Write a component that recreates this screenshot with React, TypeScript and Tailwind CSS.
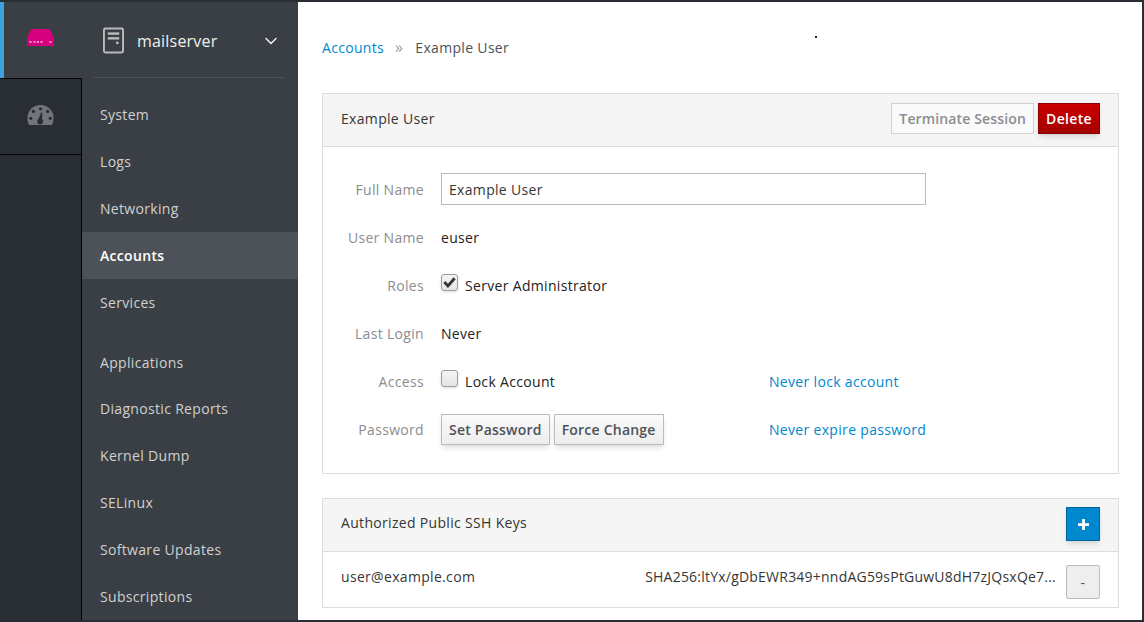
import { ChevronDown } from "lucide-react";

const primaryNav = ["System", "Logs", "Networking", "Accounts", "Services"];
const toolNav = ["Applications", "Diagnostic Reports", "Kernel Dump", "SELinux", "Software Updates", "Subscriptions"];

const NavItem = ({ label, nudge }: { label: string; nudge?: boolean }) => {
  const active = label === "Accounts";
  return (
    <div
      className={
        (nudge ? "pt-[2px] " : "") +
        (active
          ? "h-[47px] flex items-center pl-[18px] bg-[#4d5258] text-white font-semibold"
          : "h-[47px] flex items-center pl-[18px] text-[#d1d1d1]")
      }
    >
      {label}
    </div>
  );
};

const Row = ({ label, children, aside }: { label: string; children: React.ReactNode; aside?: React.ReactNode }) => (
  <div className="h-[48px] flex items-center">
    <div className="w-[83px] text-right text-[#8b8d8f]">{label}</div>
    <div className="w-[328px] ml-[17px] flex items-center text-[#222]">{children}</div>
    {aside && <a className="text-[#0088ce]">{aside}</a>}
  </div>
);

const Check = ({ checked }: { checked?: boolean }) => (
  <span className="relative w-[17px] h-[17px] -mt-[6px] mr-[7px] rounded-[3px] border border-[#9c9c9c] bg-gradient-to-b from-[#f5f5f5] to-[#e4e4e4] shadow-sm">
    {checked && (
      <svg viewBox="0 0 16 16" className="absolute left-[0px] top-0 w-[15px] h-[15px]">
        <path d="M2.5 7.5 L6.3 11.6 L13.5 3.5" fill="none" stroke="#333" strokeWidth="3" />
      </svg>
    )}
  </span>
);

const App = () => {
  return (
    <div className="h-[622px] w-[1144px] overflow-hidden flex flex-col bg-[#292e34] text-[14px] tracking-[0.32px] font-['Open_Sans',sans-serif]">
      <div className="h-[2px] bg-[#292e34] shrink-0" />
      <div className="flex-1 min-h-0 flex">
        {/* host rail */}
        <div className="w-[82px] shrink-0 border-r border-[#030303] bg-[#292e34] flex flex-col">
          <div className="h-[76px] bg-[#393f44] border-l-[4px] border-[#39a5dc] flex items-center justify-center pr-[5px] -mr-[1px] relative">
            <svg viewBox="0 0 27 17" className="w-[27px] h-[17px] -mt-[5px]">
              <path d="M4 0 H22.5 L26.5 8 H0.5 Z" fill="#d6007f" />
              <rect x="0" y="8" width="27" height="9" fill="#d6007f" />
              <g fill="#ec8fc6">
                <rect x="2.5" y="12" width="2" height="2" />
                <rect x="6.5" y="12" width="2" height="2" />
                <rect x="10" y="12" width="2" height="2" />
                <rect x="13.5" y="12" width="2" height="2" />
                <rect x="22.5" y="12" width="2" height="2" />
              </g>
            </svg>
          </div>
          <div className="h-[77px] border-y border-[#030303] flex items-center justify-center">
            <svg viewBox="0 0 28 22" className="w-[27px] h-[21px] -mt-[3px]">
              <path fill="#72767b" d="M14 0 C6.3 0 0.3 6 0.3 13.5 C0.3 16.2 1 18.7 2.2 21 H25.8 C27 18.7 27.7 16.2 27.7 13.5 C27.7 6 21.7 0 14 0 Z" />
              <g fill="#292e34">
                <circle cx="14" cy="4" r="1.7" />
                <circle cx="6.5" cy="6.8" r="1.7" />
                <circle cx="21.5" cy="6.8" r="1.7" />
                <circle cx="3.8" cy="14" r="1.7" />
                <circle cx="24.2" cy="14" r="1.7" />
                <circle cx="13.6" cy="17.2" r="3" />
                <path d="M11.6 16 L14.6 7.6 L15.8 8 L15.6 17 Z" />
              </g>
            </svg>
          </div>
        </div>

        {/* sidebar */}
        <div className="w-[216px] shrink-0 bg-[#393f44] flex flex-col">
          <div className="h-[77px] ml-[12px] mr-[13px] pt-[2px] border-b border-[#4d5258] flex items-center text-[#f0f0f0] text-[16px] tracking-[0.2px]">
            <svg viewBox="0 0 22 27" className="ml-[9px] w-[21px] h-[27px] shrink-0 -mt-[1px]">
              <rect x="1" y="1" width="20" height="25" rx="1.5" fill="none" stroke="#bbb" strokeWidth="2" />
              <rect x="5" y="5" width="12" height="2.5" fill="#bbb" />
              <rect x="5" y="10" width="12" height="2.5" fill="#bbb" />
              <circle cx="15" cy="16" r="1.5" fill="#bbb" />
            </svg>
            <span className="ml-[13px]">mailserver</span>
            <ChevronDown className="w-[20px] h-[20px] ml-auto mr-[4px] text-[#f0f0f0]" strokeWidth={1.75} />
          </div>
          <div className="pt-[13px]">
            {primaryNav.map((n) => (
              <NavItem key={n} label={n} />
            ))}
          </div>
          <div className="mt-[12px]">
            {toolNav.map((n, i) => (
              <NavItem key={n} label={n} nudge={i === 0} />
            ))}
          </div>
        </div>

        {/* main */}
        <div className="flex-1 min-w-0 bg-white relative pl-[24px] pr-[23px] text-[#363636]">
          <div className="absolute left-[517px] top-[34px] w-[2px] h-[2px] bg-[#222]" />
          <div className="h-[91px] flex items-center pb-[1px]">
            <a className="text-[#0088ce]">Accounts</a>
            <span className="ml-[11px] mr-[12px] text-[#9c9c9c] text-[16px] leading-none">»</span>
            <span className="text-[#4d5258]">Example User</span>
          </div>

          <div className="border border-[#dddddd]">
            <div className="h-[53px] bg-[#f5f5f5] border-b border-[#dddddd] flex items-center pl-[18px] pr-[18px] pb-[3px]">
              <span>Example User</span>
              <button className="ml-auto h-[31px] px-[7px] bg-[#fafafa] border border-[#d1d1d1] text-[#8b8d8f] font-semibold tracking-[0.14px]">
                Terminate Session
              </button>
              <button className="ml-[4px] h-[31px] w-[62px] bg-gradient-to-b from-[#cc0000] to-[#a30000] border border-[#8b0000] text-white font-semibold shadow-md">
                Delete
              </button>
            </div>
            <div className="pl-[18px] pt-[18px] pb-[20px]">
              <Row label="Full Name">
                <div className="w-[485px] h-[32px] shrink-0 border border-[#bababa] bg-white flex items-center px-[7px] text-[#363636]">
                  Example User
                </div>
              </Row>
              <Row label="User Name">euser</Row>
              <Row label="Roles">
                <Check checked />
                Server Administrator
              </Row>
              <Row label="Last Login">Never</Row>
              <Row label="Access" aside="Never lock account">
                <Check />
                Lock Account
              </Row>
              <Row label="Password" aside="Never expire password">
                <button className="h-[31px] px-[7px] bg-gradient-to-b from-[#fafafa] to-[#ededed] border border-[#bbbbbb] text-[#4d5258] font-semibold tracking-[0.22px] shadow-md">
                  Set Password
                </button>
                <button className="ml-[4px] h-[31px] px-[7px] bg-gradient-to-b from-[#fafafa] to-[#ededed] border border-[#bbbbbb] text-[#4d5258] font-semibold tracking-[0.22px] shadow-md">
                  Force Change
                </button>
              </Row>
            </div>
          </div>

          <div className="mt-[24px] border border-[#dddddd] h-[110px]">
            <div className="h-[53px] bg-[#f5f5f5] border-b border-[#dddddd] flex items-center px-[18px] pb-[2px]">
              <span className="mb-[4px]">Authorized Public SSH Keys</span>
              <button className="ml-auto w-[34px] h-[34px] bg-[#0088ce] border border-[#00659c] text-white flex items-center justify-center shadow-md">
                <svg viewBox="0 0 12 12" className="w-[11px] h-[11px]">
                  <path d="M4.5 0 H7.5 V4.5 H12 V7.5 H7.5 V12 H4.5 V7.5 H0 V4.5 H4.5 Z" fill="#fff" />
                </svg>
              </button>
            </div>
            <div className="h-[55px] flex items-center pl-[18px] pr-[18px]">
              <span className="mb-[6px]">user@example.com</span>
              <span className="ml-auto mb-[6px] tracking-[0.22px]">SHA256:ltYx/gDbEWR349+nndAG59sPtGuwU8dH7zJQsxQe7...</span>
              <button className="ml-[10px] w-[34px] h-[34px] mt-[5px] rounded-[2px] bg-[#eeeeee] border border-[#bbbbbb] text-[#4d5258]">
                -
              </button>
            </div>
          </div>
        </div>

        <div className="w-[2px] shrink-0 bg-[#292e34]" />
      </div>
      <div className="h-[2px] bg-[#292e34] shrink-0" />
    </div>
  );
};

export default App;
